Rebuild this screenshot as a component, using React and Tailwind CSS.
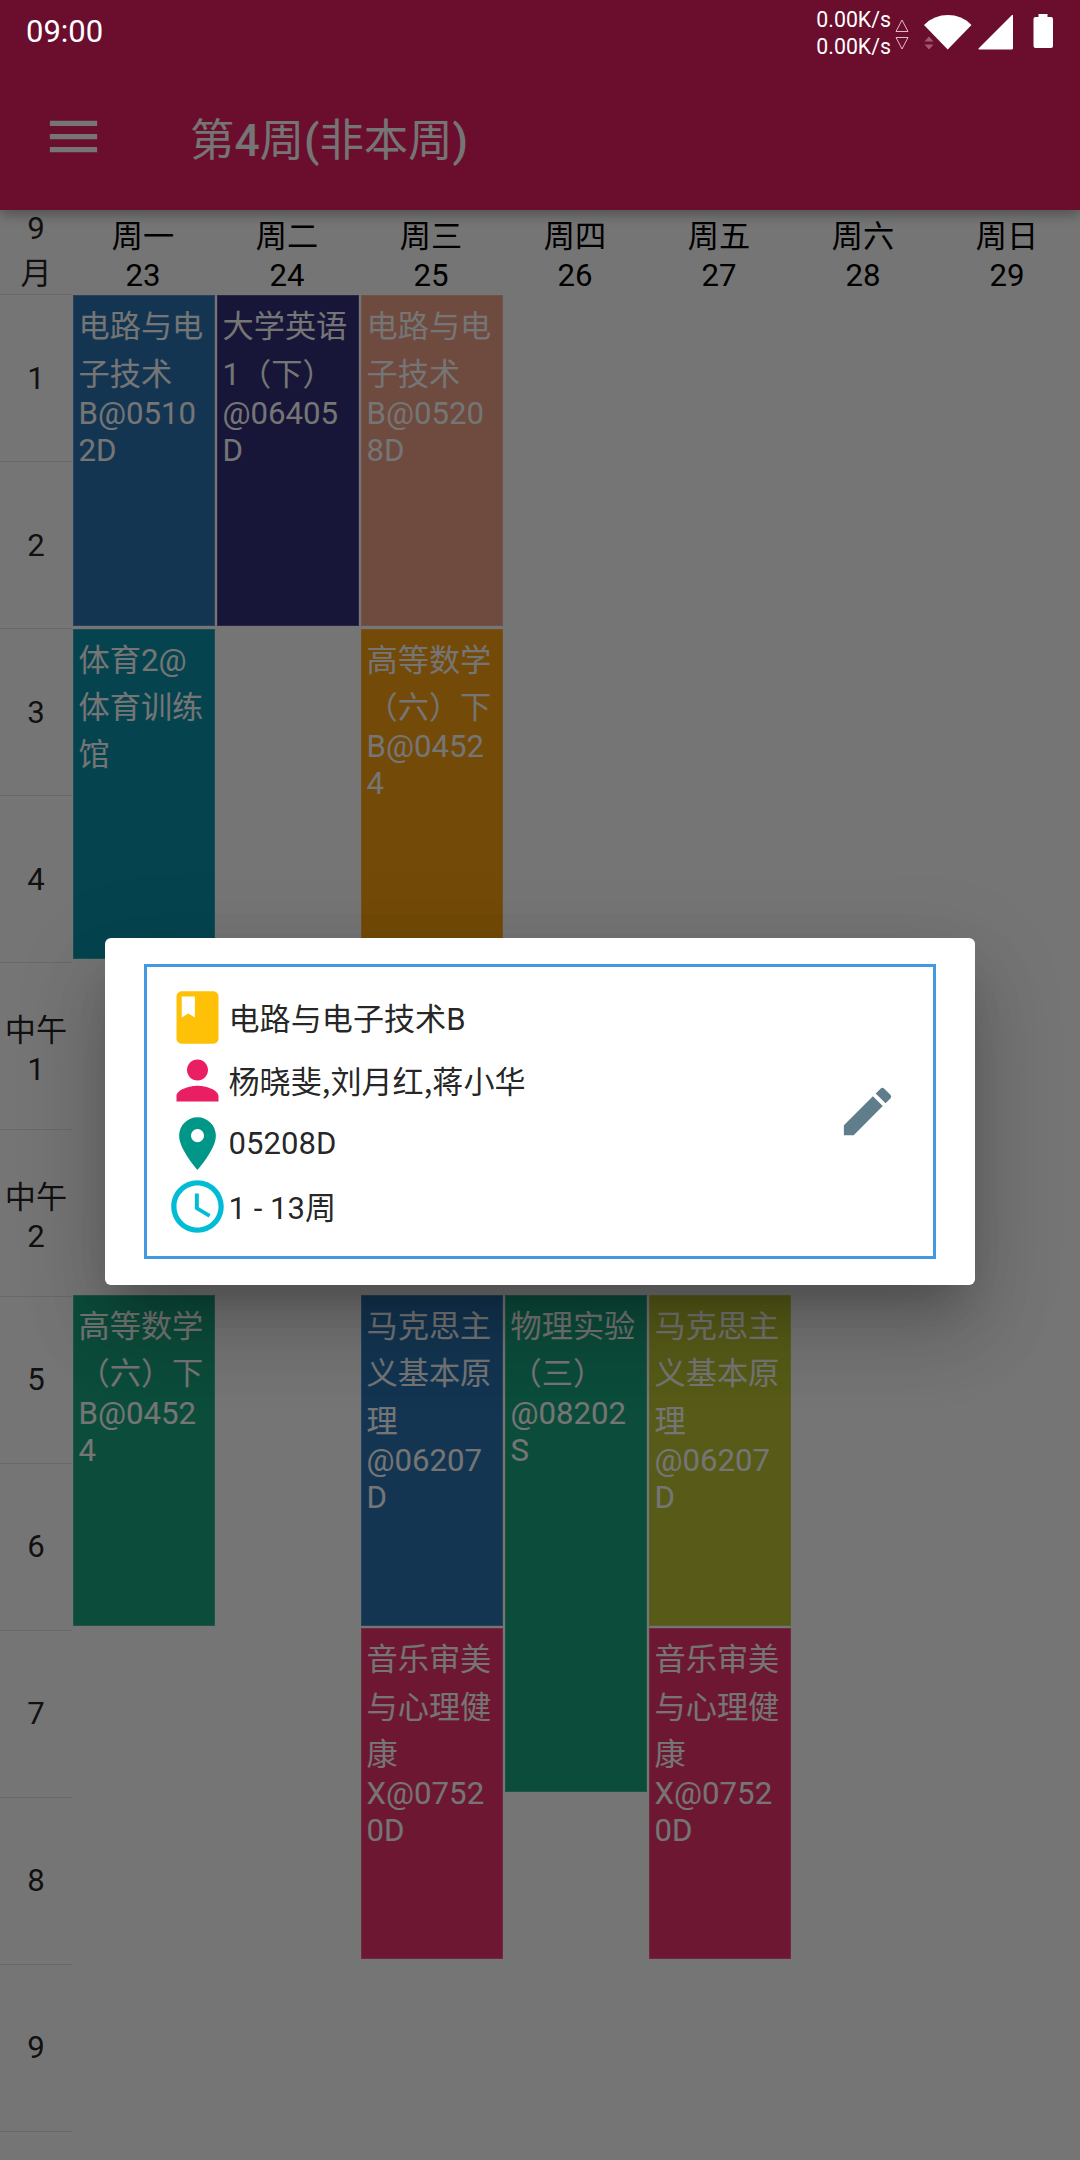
import { MdMenu, MdBook, MdPerson, MdPlace, MdAccessTime, MdEdit } from "react-icons/md";

const days = [
  ["周一", "23"],
  ["周二", "24"],
  ["周三", "25"],
  ["周四", "26"],
  ["周五", "27"],
  ["周六", "28"],
  ["周日", "29"],
];

const periods = [
  { lines: ["1"], pad: "" },
  { lines: ["2"], pad: "" },
  { lines: ["3"], pad: "" },
  { lines: ["4"], pad: "" },
  { lines: ["中午", "1"], pad: "pt-[8px]" },
  { lines: ["中午", "2"], pad: "pt-[8px]" },
  { lines: ["5"], pad: "pb-px" },
  { lines: ["6"], pad: "pb-px" },
  { lines: ["7"], pad: "pb-px" },
  { lines: ["8"], pad: "pb-px" },
  { lines: ["9"], pad: "pb-px" },
];

const courses = [
  { place: "col-start-1 row-start-1 row-span-2", color: "bg-[#2b75b4]", name: ["电路与电", "子技术"], room: ["B@0510", "2D"] },
  { place: "col-start-2 row-start-1 row-span-2", color: "bg-[#322e7a]", name: ["大学英语", "1（下）"], room: ["@06405", "D"] },
  { place: "col-start-3 row-start-1 row-span-2", color: "bg-[#efa189]", name: ["电路与电", "子技术"], room: ["B@0520", "8D"] },
  { place: "col-start-1 row-start-3 row-span-2", color: "bg-[#0d94ac]", name: ["体育2@", "体育训练", "馆"], room: [] },
  { place: "col-start-3 row-start-3 row-span-2", color: "bg-[#faa111]", name: ["高等数学", "（六）下"], room: ["B@0452", "4"] },
  { place: "col-start-1 row-start-7 row-span-2", color: "bg-[#1ca780]", name: ["高等数学", "（六）下"], room: ["B@0452", "4"] },
  { place: "col-start-3 row-start-7 row-span-2", color: "bg-[#2b75b4]", name: ["马克思主", "义基本原", "理"], room: ["@06207", "D"] },
  { place: "col-start-4 row-start-7 row-span-3 h-[496.6px]", color: "bg-[#1ca780]", name: ["物理实验", "（三）"], room: ["@08202", "S"] },
  { place: "col-start-5 row-start-7 row-span-2", color: "bg-[#bdc634]", name: ["马克思主", "义基本原", "理"], room: ["@06207", "D"] },
  { place: "col-start-3 row-start-9 row-span-2", color: "bg-[#ef346f]", name: ["音乐审美", "与心理健", "康"], room: ["X@0752", "0D"] },
  { place: "col-start-5 row-start-9 row-span-2", color: "bg-[#ef346f]", name: ["音乐审美", "与心理健", "康"], room: ["X@0752", "0D"] },
];

const details = [
  { Icon: MdBook, color: "text-[#ffc107]", text: "电路与电子技术B", style: "pt-1" },
  { Icon: MdPerson, color: "text-[#e91e63]", text: "杨晓斐,刘月红,蒋小华", style: "pb-px font-['Noto_Sans_CJK_SC',sans-serif]" },
  { Icon: MdPlace, color: "text-[#009688]", text: "05208D", style: "" },
  { Icon: MdAccessTime, color: "text-[#00bcd4]", text: "1 - 13周", style: "pt-1" },
];

function StatusBar() {
  return (
    <div className="absolute inset-x-0 top-0 z-20 flex h-[66px] items-start justify-between pl-[26px] pr-[26px] text-white">
      <div className="pt-[14px] text-[31px] leading-[36px]">09:00</div>
      <div className="flex">
        <div className="pt-[6px] text-[21.3px] leading-[27px]">
          <div>0.00K/s</div>
          <div>0.00K/s</div>
        </div>
        <svg className="ml-[3px] mt-[18px]" width="16" height="34" viewBox="0 0 16 34" fill="none" stroke="#e3b9c6" strokeWidth="1">
          <path d="M8 2 L14 13.5 H2 Z" />
          <path d="M8 31 L14 19.5 H2 Z" />
        </svg>
        <svg className="ml-[14px] mt-[14px]" width="130" height="37" viewBox="0 0 130 37">
          <path d="M0 11 C13 -2.300 35 -2.300 47.500 11 L23.700 35.500 Z" fill="#fff" />
          <path d="M0.500 27.500 L5 22.500 L9.500 27.500 Z M0.500 30.500 L5 35.500 L9.500 30.500 Z" fill="#a05a70" />
          <path d="M89 1 V34 Q89 35.500 87.500 35.500 H55 Q54 35 54.500 34.500 L88 1 Z" fill="#fff" />
          <path d="M114.500 0 H123.500 V3 H127 Q129 3 129 5 V32 Q129 34 127 34 H111.500 Q109.500 34 109.500 32 V5 Q109.500 3 111.500 3 H114.500 Z" fill="#fff" />
        </svg>
      </div>
    </div>
  );
}

function Course({ place, color, name, room }) {
  return (
    <div className={`${place} ${color} mb-[2.4px] ml-[2px] whitespace-nowrap border border-white/20 pl-[4.5px] pt-[7px] text-white`}>
      {name.map((line) => (
        <div key={line} className="leading-[47.3px]">{line}</div>
      ))}
      <div className="-mt-[3px] leading-[37px]">
        {room.map((line) => (
          <div key={line}>{line}</div>
        ))}
      </div>
    </div>
  );
}

function Timetable() {
  return (
    <main className="flex text-[31.2px]">
      <div className="w-[72px] shrink-0 text-center text-black/87">
        <div className="flex h-[85px] flex-col border-b border-black/10">
          <span className="h-[37px] leading-[37px]">9</span>
          <span className="leading-[54px]">月</span>
        </div>
        {periods.map(({ lines, pad }, i) => (
          <div key={i} className={`flex h-[167px] flex-col items-center justify-center border-b border-black/10 leading-[39px] ${pad}`}>
            {lines.map((t) => (
              <span key={t}>{t}</span>
            ))}
          </div>
        ))}
      </div>
      <div className="-ml-px">
        <div className="grid h-[85.3px] grid-cols-[repeat(7,144px)] pt-[7px] text-center leading-[39px] text-black">
          {days.map(([d, n]) => (
            <div key={d}>
              <div>{d}</div>
              <div>{n}</div>
            </div>
          ))}
        </div>
        <div className="grid grid-cols-[repeat(7,144px)] grid-rows-[repeat(11,166.65px)]">
          {courses.map((c, i) => (
            <Course key={i} {...c} />
          ))}
        </div>
      </div>
    </main>
  );
}

function DetailDialog() {
  return (
    <div className="absolute inset-0 z-10 bg-black/54 pt-[938px]">
      <div className="mx-auto h-[347px] w-[870px] rounded-[6px] bg-white px-[39px] py-[26px] shadow-[0_29px_39px_-18px_rgba(0,0,0,0.2),0_50px_80px_4px_rgba(0,0,0,0.12),0_24px_90px_10px_rgba(0,0,0,0.1)]">
        <div className="flex h-[295px] items-center justify-between border-[3px] border-[#4398e2] pl-[18.5px] pr-[34px]">
          <ul>
            {details.map(({ Icon, color, text, style }) => (
              <li key={text} className="flex h-[63px] items-center text-[31.1px] leading-[37px] text-black/87">
                <Icon size={63} className={color} />
                <span className={style}>{text}</span>
              </li>
            ))}
          </ul>
          <MdEdit size={63} className="text-[#607d8b]" />
        </div>
      </div>
    </div>
  );
}

export default function App() {
  return (
    <div className="relative h-[2160px] w-[1080px] overflow-hidden bg-white font-['Roboto','Noto_Sans_CJK_SC',sans-serif]">
      <header className="relative flex h-[210px] items-end bg-[#e91e63] pl-[42px] text-white shadow-[0_5px_12px_rgba(0,0,0,0.3)]">
        <MdMenu size={63} className="mb-[42px]" />
        <h1 className="mb-[43px] ml-[85px] text-[44.4px] font-medium leading-[52px]">
          <span className="font-normal">第</span>4<span className="font-normal">周</span>(
          <span className="font-normal">非本周</span>)
        </h1>
      </header>
      <Timetable />
      <DetailDialog />
      <StatusBar />
    </div>
  );
}
